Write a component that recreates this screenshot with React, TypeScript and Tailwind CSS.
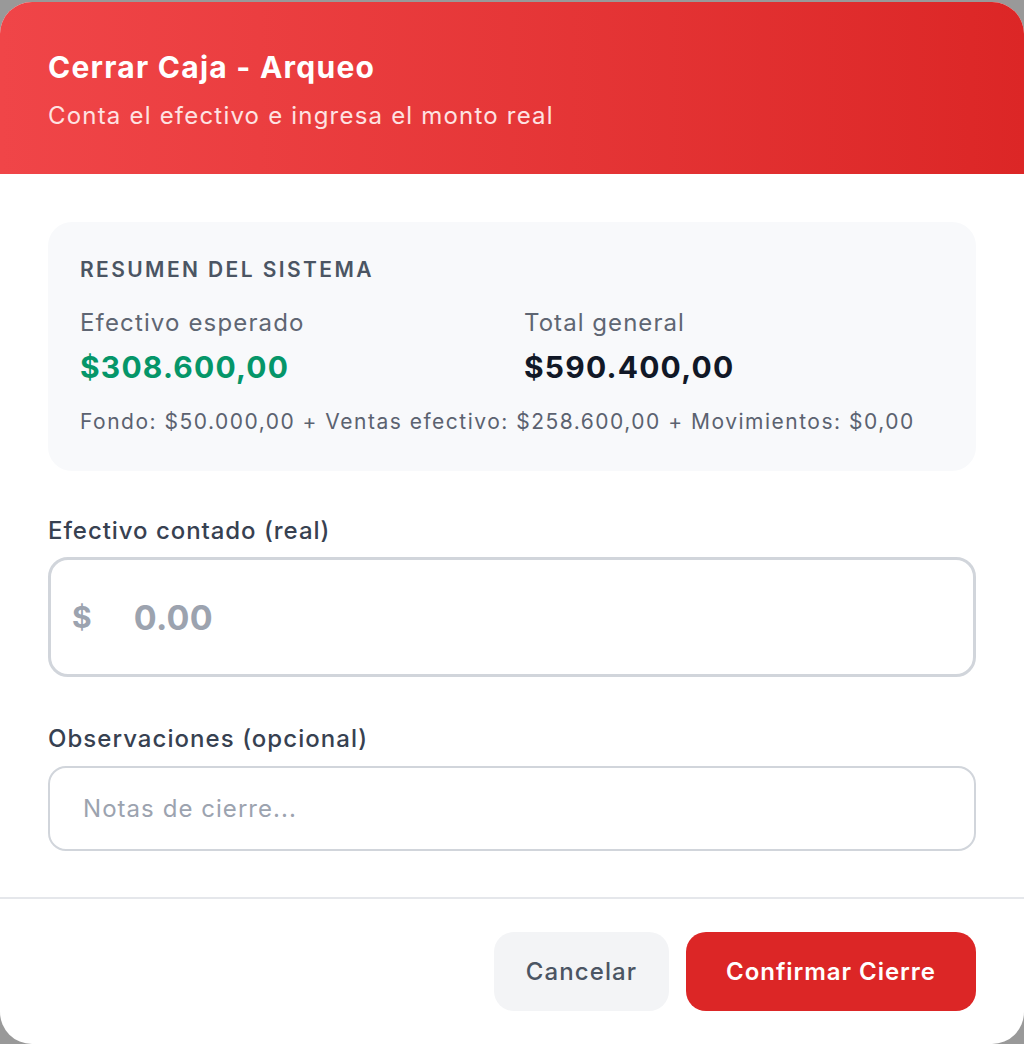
import React from "react";

export default function App() {
  return (
    <div
      className="h-[1044px] w-full overflow-hidden bg-[#999999] flex justify-center"
      style={{ fontFamily: "Inter, 'Noto Sans', sans-serif" }}
    >
      <div className="mt-[2px] w-[1024px] h-[1042px] rounded-[32px] bg-white overflow-hidden flex flex-col">
        {/* Header */}
        <div className="bg-linear-to-r from-[#f04548] to-[#dc2626] px-12 pt-[47px] pb-[42px]">
          <h2 className="text-[30px] leading-[36px] font-bold text-white tracking-[1.25px]">Cerrar Caja - Arqueo</h2>
          <p className="mt-[15px] text-[24px] leading-[32px] text-[#fee2e2] tracking-[1.2px]">
            Conta el efectivo e ingresa el monto real
          </p>
        </div>

        {/* Body */}
        <div className="px-12 pt-12 pb-[46px] flex flex-col">
          <div className="rounded-[24px] bg-[#f8f9fb] px-8 pt-[33px] pb-[34px]">
            <div className="text-[21px] leading-[30px] font-semibold uppercase tracking-[2.4px] text-[#4b5563]">
              Resumen del sistema
            </div>
            <div className="mt-[20px] grid grid-cols-2 gap-6">
              <div>
                <div className="text-[24px] leading-[36px] text-[#5f6673] tracking-[1.15px]">Efectivo esperado</div>
                <div className="mt-[5px] text-[30px] leading-[42px] font-bold text-[#059669] tracking-[1.2px]">$308.600,00</div>
              </div>
              <div>
                <div className="text-[24px] leading-[36px] text-[#5f6673] tracking-[1.05px]">Total general</div>
                <div className="mt-[5px] text-[30px] leading-[42px] font-bold text-[#111827] tracking-[1.2px]">$590.400,00</div>
              </div>
            </div>
            <div className="mt-[19px] text-[21px] leading-[30px] text-[#5b6270] tracking-[1.5px]">
              Fondo: $50.000,00 + Ventas efectivo: $258.600,00 + Movimientos: $0,00
            </div>
          </div>

          <label className="mt-[45px] block text-[24px] leading-[30px] font-medium text-[#374151] tracking-[0.95px]">
            Efectivo contado (real)
          </label>
          <div className="mt-[11px] h-[120px] rounded-[20px] border-[3px] border-[#d1d5db] flex items-center">
            <span className="ml-[21px] text-[30px] font-bold text-[#9ca3af]">$</span>
            <span className="ml-[42px] text-[34px] font-bold text-[#9ca3af] tracking-[0.3px]">0.00</span>
          </div>

          <label className="mt-[47px] block text-[24px] leading-[30px] font-medium text-[#374151] tracking-[1.05px]">
            Observaciones (opcional)
          </label>
          <div className="mt-[12px] h-[85px] rounded-[18px] border-2 border-[#d1d5db] flex items-center">
            <span className="ml-[33px] text-[24px] text-[#9ca3af] tracking-[1.05px]">Notas de cierre...</span>
          </div>
        </div>

        {/* Footer */}
        <div className="border-t-2 border-[#e5e7eb] px-12 pt-[33px] flex justify-end gap-[17px]">
          <button className="w-[175px] h-[79px] rounded-[20px] bg-[#f3f4f6] text-[24px] font-medium text-[#4b5563] tracking-[1.1px]">
            Cancelar
          </button>
          <button className="w-[290px] h-[79px] rounded-[20px] bg-[#dc2626] text-[24px] font-semibold text-white tracking-[0.95px]">
            Confirmar Cierre
          </button>
        </div>
      </div>
    </div>
  );
}
